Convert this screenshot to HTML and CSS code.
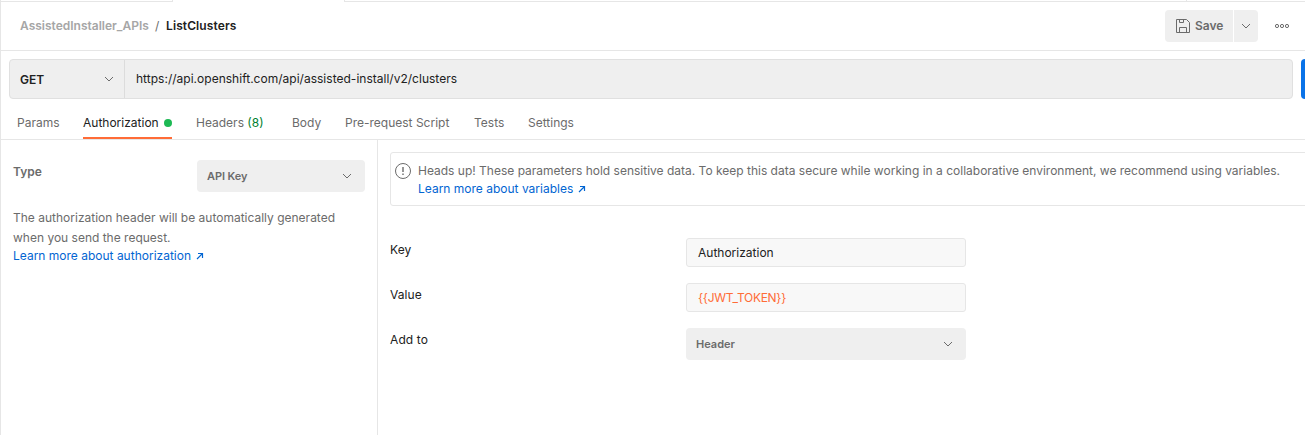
FILE: index.html
```html
<!DOCTYPE html>
<html lang="en">
<head>
<meta charset="utf-8">
<title>ListClusters</title>
<link rel="stylesheet" href="styles.css">
</head>
<body>
<div class="app">
  <div class="tabstrip"><div class="strip-left"></div><div class="strip-active"></div><div class="strip-mid"></div><div class="strip-right"></div></div>
  <header class="header">
    <div class="crumbs"><span class="crumb">AssistedInstaller_APIs</span><span class="slash">/</span><span class="current">ListClusters</span></div>
    <div class="actions">
      <button class="save"><svg width="16" height="16" viewBox="0 0 16 16" fill="none" stroke="#6b6b6b"><path d="M1.500 1.500H11.500L14.500 4.500V14.500H1.500ZM4.500 1.500V4.500H8.500V1.500M4.500 14.500V9.500H11.500V14.500"/></svg><span class="save-text">Save</span></button>
      <button class="save-more"><svg class="chevron" viewBox="0 0 10 6"><path d="M1 1L5 5L9 1"/></svg></button>
      <svg class="more" width="16" height="6" viewBox="0 0 16 6" fill="none" stroke="#6b6b6b"><circle cx="3" cy="3" r="1.6"/><circle cx="8" cy="3" r="1.6"/><circle cx="13" cy="3" r="1.6"/></svg>
    </div>
  </header>
  <div class="request">
    <div class="urlbar">
      <div class="method"><span class="method-text">GET</span><svg class="chevron" viewBox="0 0 10 6"><path d="M1 1L5 5L9 1"/></svg></div>
      <div class="url"><span class="url-text">https://api.openshift.com/api/assisted-install/v2/clusters</span></div>
    </div>
    <div class="send"></div>
  </div>
  <nav class="tabs">
    <div class="tab t-params">Params</div>
    <div class="tab t-auth active">Authorization<span class="dot"></span></div>
    <div class="tab t-headers">Headers <span class="count">(8)</span></div>
    <div class="tab t-body">Body</div>
    <div class="tab t-pre">Pre-request Script</div>
    <div class="tab t-tests">Tests</div>
    <div class="tab t-settings">Settings</div>
  </nav>
  <main class="content">
    <aside class="side">
      <div class="type-row"><span class="type">Type</span><div class="select type-select"><span>API Key</span><svg class="chevron" viewBox="0 0 10 6"><path d="M1 1L5 5L9 1"/></svg></div></div>
      <p class="desc">The authorization header will be automatically generated<br>when you send the request.</p>
      <a class="link"><span>Learn more about authorization</span><svg class="arrow" viewBox="0 0 8 8"><path d="M1 7L6.500 1.500M2 1.500H6.500V6"/></svg></a>
    </aside>
    <section class="detail">
      <div class="notice">
        <svg class="info" width="18" height="18" viewBox="0 0 18 18"><circle cx="9" cy="9" r="7.500" fill="none" stroke="#6b6b6b"/><path d="M9 5V10M9 11.500V13" stroke="#6b6b6b" stroke-width="1.400"/></svg>
        <div><p class="notice-text">Heads up! These parameters hold sensitive data. To keep this data secure while working in a collaborative environment, we recommend using variables.</p>
        <a class="link"><span>Learn more about variables</span><svg class="arrow" viewBox="0 0 8 8"><path d="M1 7L6.500 1.500M2 1.500H6.500V6"/></svg></a></div>
      </div>
      <div class="form">
        <div class="row"><span class="label">Key</span><div class="input">Authorization</div></div>
        <div class="row"><span class="label">Value</span><div class="input variable">{{JWT_TOKEN}}</div></div>
        <div class="row"><span class="label">Add to</span><div class="select add-select"><span>Header</span><svg class="chevron" viewBox="0 0 10 6"><path d="M1 1L5 5L9 1"/></svg></div></div>
      </div>
    </section>
  </main>
</div>
</body>
</html>
```
FILE: styles.css
```css
* { box-sizing: border-box; }
body { margin: 0; background: #fff; font: 12px/18px Inter, "Liberation Sans", sans-serif; color: #212121; overflow: hidden; }
p { margin: 0; }
button { border: 0; font: inherit; padding: 0; }
.app { width: 1305px; height: 435px; border-left: 1px solid #e6e6e6; overflow: hidden; display: flex; flex-direction: column; white-space: nowrap; }
.tabstrip { display: flex; height: 2px; flex: none; }
.strip-left { width: 172px; border-right: 1px solid #e6e6e6; border-bottom: 1px solid #e6e6e6; }
.strip-active { width: 171px; }
.strip-mid { width: 843px; border: solid #e6e6e6; border-width: 0 1px 1px; }
.strip-right { flex: 1; border-bottom: 1px solid #e6e6e6; }
.header { height: 49px; flex: none; display: flex; justify-content: space-between; align-items: center; border-bottom: 1px solid #e6e6e6; padding: 0 15px 0 19px; }
.crumbs { display: flex; font-weight: 600; }
.crumb { color: #a6a6a6; width: 135px; }
.slash { color: #6b6b6b; width: 11px; font-weight: 400; }
.current { letter-spacing: .1px; }
.actions { display: flex; align-items: center; }
.save, .save-more { background: #efefef; height: 32px; color: #6b6b6b; display: flex; align-items: center; }
.save { width: 68px; border-radius: 4px 0 0 4px; padding-left: 10px; gap: 4px; font-weight: 600; margin-right: 1px; }
.save-more { width: 24px; border-radius: 0 4px 4px 0; justify-content: center; margin-right: 16px; }
.chevron { width: 10px; height: 6px; fill: none; stroke: #6b6b6b; flex: none; }
.request { display: flex; gap: 8px; padding: 8px 0 0 8px; height: 48px; flex: none; }
.urlbar { width: 1284px; height: 40px; flex: none; display: flex; border: 1px solid #e0e0e0; border-radius: 4px; background: #efefef; }
.method { width: 115px; border-right: 1px solid #dcdcdc; padding: 2px 10px 0; display: flex; align-items: center; justify-content: space-between; font-weight: 600; }
.method .chevron { margin-bottom: 2px; }
.url { padding-left: 11px; display: flex; align-items: center; letter-spacing: .015px; }
.send { width: 20px; height: 40px; flex: none; border-radius: 4px; background: #0a73e8; }
.tabs { height: 41px; flex: none; display: flex; padding-left: 16px; border-bottom: 1px solid #e6e6e6; color: #6b6b6b; }
.tab { padding-top: 15px; height: 40px; }
.t-params { width: 66px; }
.t-auth { width: 89px; margin-right: 24px; }
.t-headers { width: 96px; }
.t-body { width: 53px; }
.t-pre { width: 129px; }
.t-tests { width: 54px; }
.active { color: #212121; border-bottom: 2px solid #ff6c37; display: flex; justify-content: space-between; align-items: flex-start; }
.dot { width: 8px; height: 8px; margin-top: 5px; border-radius: 50%; background: #1db954; }
.count { color: #007f31; }
.content { display: flex; flex: 1; }
.side { width: 377px; flex: none; border-right: 1px solid #e6e6e6; padding: 20px 12px 0; color: #6b6b6b; }
.type-row { display: flex; justify-content: space-between; height: 48px; }
.type { font-weight: 600; padding-top: 3px; }
.select { height: 32px; background: #efefef; border-radius: 4px; display: flex; align-items: center; justify-content: space-between; font-size: 11px; font-weight: 600; color: #6b6b6b; padding: 0 13px 0 10px; }
.type-select { width: 168px; letter-spacing: -.1px; }
.desc { line-height: 20px; }
.link { color: #0265d2; display: flex; align-items: center; gap: 5px; line-height: 18px; }
.side .link { margin-top: -1px; }
.arrow { width: 8px; height: 8px; fill: none; stroke: #0265d2; stroke-width: 1.200; }
.detail { flex: 1; padding: 12px 0 0 12px; min-width: 0; }
.notice { width: 940px; height: 54px; border: 1px solid #e6e6e6; border-radius: 3px; display: flex; padding: 9px 0 0 3px; color: #6b6b6b; }
.info { margin-right: 6px; flex: none; }
.form { padding-top: 32px; }
.row { height: 45px; display: flex; align-items: flex-start; }
.label { width: 296px; padding-top: 3px; letter-spacing: .1px; }
.input { width: 280px; height: 29px; border: 1px solid #e6e6e6; background: #f8f8f8; border-radius: 3px; padding: 5px 11px; }
.variable { color: #ff6c37; letter-spacing: -.3px; }
.add-select { width: 280px; }
```
